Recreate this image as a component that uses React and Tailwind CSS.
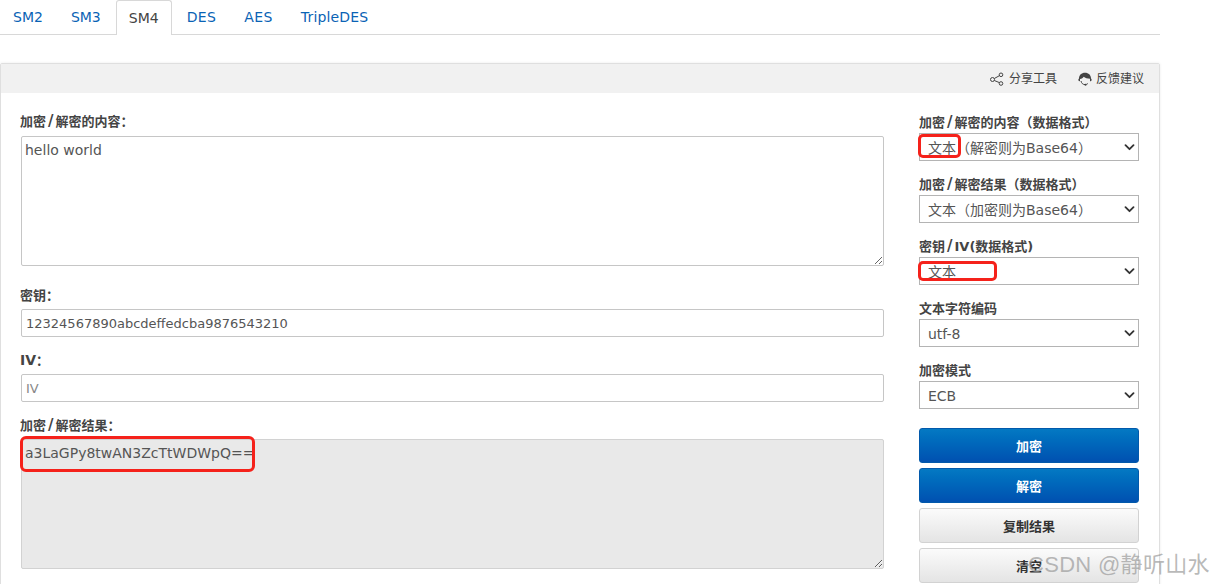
const FONT = "font-['DejaVu_Sans','Noto_Sans_CJK_SC',sans-serif]";

function Chevron() {
  return (
    <svg className="absolute right-[3px] top-[10px] pointer-events-none" width="11" height="7" viewBox="0 0 11 7" fill="none">
      <path d="M1.5 1.2 L5.5 5.2 L9.5 1.2" stroke="#333" strokeWidth="1.8" strokeLinecap="round" strokeLinejoin="round" />
    </svg>
  );
}

function Slash() {
  return <span className="font-bold text-[15px] leading-none mx-[2px]">/</span>;
}

function Select({ label, value, mark }) {
  return (
    <div className="flex flex-col h-[62px]">
      <div className="h-[19px] text-[13px] leading-[17px] font-bold text-[#444] whitespace-nowrap">{label}</div>
      <div className="relative w-[220px] h-[28px] border border-[#b4b4b4] bg-white">
        <select defaultValue={value} className="appearance-none w-full h-full pl-2 pt-[2px] text-[14px] leading-[24px] text-[#555] bg-transparent outline-none">
          <option>{value}</option>
        </select>
        <Chevron />
        {mark}
      </div>
    </div>
  );
}

function Btn({ children, primary }) {
  return (
    <button
      className={
        primary
          ? "w-[220px] h-[35px] shrink-0 pt-[2px] rounded-[3px] border border-[#0259ab] bg-gradient-to-b from-[#0479c3] to-[#0050b0] text-white text-[13px] font-bold"
          : "w-[220px] h-[35px] shrink-0 pt-[2px] rounded-[3px] border border-[#d2d2d2] bg-gradient-to-b from-[#fbfbfb] to-[#e4e4e4] text-[#333] text-[13px] font-bold"
      }
    >
      {children}
    </button>
  );
}

function Tab({ children, active, track }) {
  return active ? (
    <div className="h-[35px] -mb-px mx-[1px] px-[12px] flex items-center bg-white border border-b-0 border-[#d8d8d8] rounded-t-[3px] text-[#444] text-[14px]">
      {children}
    </div>
  ) : (
    <div className={`h-[34px] px-[14px] flex items-center text-[#0a63b5] text-[14px] ${track || ""}`}>{children}</div>
  );
}

function Label({ children }) {
  return <div className="h-[18px] text-[13px] leading-[18px] font-bold text-[#444] whitespace-nowrap">{children}</div>;
}

const inputCls =
  "block w-[863px] h-[28px] ml-px px-[4px] border border-[#c6c6c6] rounded-[2px] text-[13px] text-[#555] bg-white outline-none placeholder:text-[#888]";

export default function App() {
  return (
    <div className={`relative w-[1215px] h-[584px] overflow-hidden bg-white ${FONT}`}>
      <div className="w-[1160px] h-[35px] flex border-b border-[#d8d8d8]">
        <div className="-ml-px flex">
          <Tab>SM2</Tab>
          <Tab>SM3</Tab>
          <Tab active>SM4</Tab>
          <Tab track="tracking-[0.4px]">DES</Tab>
          <Tab track="tracking-[0.4px]">AES</Tab>
          <Tab track="tracking-[0.15px]">TripleDES</Tab>
        </div>
      </div>

      <div className="mt-[28px] w-[1160px] h-[540px] border border-[#dfdfdf] rounded-t-[2px] shadow-[0_0_3px_rgba(0,0,0,0.08)]">
        <div className="h-[29px] pt-[1px] bg-[#f1f1f1] flex items-center justify-end pr-[15px] gap-[21px] text-[12px] text-[#444]">
          <div className="flex items-center gap-[5px]">
            <svg width="14" height="14" viewBox="0 0 14 14" fill="none" stroke="#444" strokeWidth="1">
              <circle cx="2.5" cy="7.5" r="2" />
              <circle cx="11" cy="2.8" r="1.8" />
              <circle cx="11" cy="11.5" r="1.8" />
              <path d="M4.3 6.5 L9.4 3.7 M4.3 8.5 L9.4 10.6" />
            </svg>
            <span>分享工具</span>
          </div>
          <div className="flex items-center gap-[4px]">
            <svg width="14" height="15" viewBox="0 0 14 15">
              <path d="M7 .8C3.400.8 1 3.200 1 6.400c-.6.400-.8 1-.6 1.800.2.700.6 1 1.200 1l.4-.2V7c1.800-.2 3-1 3.700-2.200C7 6 9.500 6.800 12 6.800v2.400l.4 0c.6 0 1-.3 1.200-1 .2-.8 0-1.400-.6-1.800C13 3.200 10.600.8 7 .8z" fill="#444" />
              <path d="M3 9c.5 2.200 1.800 3.600 4 3.600 1.200 0 2.100-.4 2.800-1" fill="none" stroke="#444" strokeWidth="1" />
              <circle cx="7.500" cy="12.800" r="1" fill="#444" />
            </svg>
            <span>反馈建议</span>
          </div>
        </div>

        <div className="flex pl-[19px] pt-[20px]">
          <div className="w-[865px]">
            <Label>加密<Slash />解密的内容：</Label>
            <textarea
              readOnly
              defaultValue="hello world"
              className="block w-[863px] h-[130px] ml-px mt-[5px] px-[3px] py-[3px] border border-[#c6c6c6] rounded-[2px] text-[14px] leading-[20px] text-[#555] outline-none resize-y"
            />
            <div className="mt-[21px]">
              <Label>密钥：</Label>
            </div>
            <input readOnly defaultValue="12324567890abcdeffedcba9876543210" className={`${inputCls} mt-[4px]`} />
            <div className="mt-[14px]">
              <Label><span className="text-[14px]">IV</span>：</Label>
            </div>
            <input readOnly placeholder="IV" className={`${inputCls} mt-[5px]`} />
            <div className="mt-[15px]">
              <Label>加密<Slash />解密结果：</Label>
            </div>
            <div className="relative mt-[4px] ml-px">
              <textarea
                readOnly
                defaultValue="a3LaGPy8twAN3ZcTtWDWpQ=="
                className="block w-[863px] h-[130px] px-[3px] py-[3px] border border-[#d2d2d2] rounded-[2px] bg-[#e9e9e9] text-[14px] leading-[20px] text-[#555] outline-none resize-y"
              />
              <div className="absolute -left-px top-[-3px] w-[235px] h-[36px] border-[3px] border-[#f5221b] rounded-[6px]" />
            </div>
          </div>

          <div className="ml-[34px] w-[220px] mt-[1px] flex flex-col">
            <Select
              label={<>加密<Slash />解密的内容（数据格式）</>}
              value="文本（解密则为Base64）"
              mark={<div className="absolute -left-[2px] top-0 w-[43px] h-[24px] border-[3px] border-[#f5221b] rounded-[5px]" />}
            />
            <Select label={<>加密<Slash />解密结果（数据格式）</>} value="文本（加密则为Base64）" />
            <Select
              label={<>密钥<Slash />IV(数据格式)</>}
              value="文本"
              mark={<div className="absolute -left-[2px] top-[3px] w-[79px] h-[20px] border-[3px] border-[#f5221b] rounded-[5px]" />}
            />
            <Select label="文本字符编码" value="utf-8" />
            <Select label="加密模式" value="ECB" />
            <div className="mt-[4px] flex flex-col gap-[5px]">
              <Btn primary>加密</Btn>
              <Btn primary>解密</Btn>
              <Btn>复制结果</Btn>
              <Btn>清空</Btn>
            </div>
          </div>
        </div>
      </div>

      <div className="absolute left-[1028px] top-[551px] text-[22px] leading-[28px] tracking-[0.3px] text-[#9a9a9a]/70 whitespace-nowrap font-['Liberation_Sans','Noto_Sans_CJK_SC',sans-serif]">
        CSDN @静听山水
      </div>
    </div>
  );
}
